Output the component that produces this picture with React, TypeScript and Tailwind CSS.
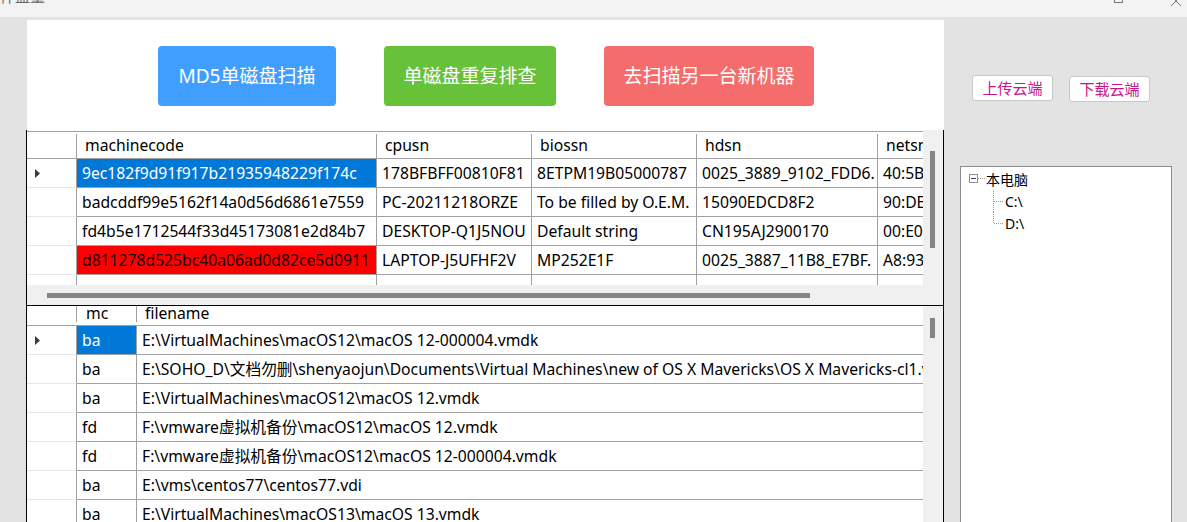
import React from "react";

type Cell = { text: string; tone?: "sel" | "red" };
type Col = { label: string; w: string; pad: string };

const grid1Cols: Col[] = [
  { label: "machinecode", w: "w-[300px]", pad: "pl-[8px]" },
  { label: "cpusn", w: "w-[155px]", pad: "pl-[8px]" },
  { label: "biossn", w: "w-[165px]", pad: "pl-[8px]" },
  { label: "hdsn", w: "w-[181px]", pad: "pl-[8px]" },
  { label: "netsn", w: "w-[120px]", pad: "pl-[8px]" },
];

const grid1Rows: Cell[][] = [
  [
    { text: "9ec182f9d91f917b21935948229f174c", tone: "sel" },
    { text: "178BFBFF00810F81" },
    { text: "8ETPM19B05000787" },
    { text: "0025_3889_9102_FDD6." },
    { text: "40:5B:D8:1A:22:0C" },
  ],
  [
    { text: "badcddf99e5162f14a0d56d6861e7559" },
    { text: "PC-20211218ORZE" },
    { text: "To be filled by O.E.M." },
    { text: "15090EDCD8F2" },
    { text: "90:DE:80:4C:11:2A" },
  ],
  [
    { text: "fd4b5e1712544f33d45173081e2d84b7" },
    { text: "DESKTOP-Q1J5NOU" },
    { text: "Default string" },
    { text: "CN195AJ2900170" },
    { text: "00:E0:4C:68:01:9B" },
  ],
  [
    { text: "d811278d525bc40a06ad0d82ce5d0911", tone: "red" },
    { text: "LAPTOP-J5UFHF2V" },
    { text: "MP252E1F" },
    { text: "0025_3887_11B8_E7BF." },
    { text: "A8:93:4A:5E:77:10" },
  ],
];

const grid2Cols: Col[] = [
  { label: "mc", w: "w-[60px]", pad: "pl-[9px]" },
  { label: "filename", w: "w-[800px]", pad: "pl-[8px]" },
];

const grid2Rows: Cell[][] = [
  [{ text: "ba", tone: "sel" }, { text: "E:\\VirtualMachines\\macOS12\\macOS 12-000004.vmdk" }],
  [
    { text: "ba" },
    {
      text: "E:\\SOHO_D\\文档勿删\\shenyaojun\\Documents\\Virtual Machines\\new of OS X Mavericks\\OS X Mavericks-cl1.vmdk",
    },
  ],
  [{ text: "ba" }, { text: "E:\\VirtualMachines\\macOS12\\macOS 12.vmdk" }],
  [{ text: "fd" }, { text: "F:\\vmware虚拟机备份\\macOS12\\macOS 12.vmdk" }],
  [{ text: "fd" }, { text: "F:\\vmware虚拟机备份\\macOS12\\macOS 12-000004.vmdk" }],
  [{ text: "ba" }, { text: "E:\\vms\\centos77\\centos77.vdi" }],
  [{ text: "ba" }, { text: "E:\\VirtualMachines\\macOS13\\macOS 13.vmdk" }],
];

function RowArrow() {
  return (
    <svg width="6" height="9" viewBox="0 0 6 9" className="ml-[8px]">
      <polygon points="0,0 5,4.5 0,9" fill="#3c3c3c" />
    </svg>
  );
}

function DataRow({ cols, cells, current }: { cols: Col[]; cells: Cell[]; current?: boolean }) {
  return (
    <div className="flex h-[29px] shrink-0">
      <div className="w-[50px] shrink-0 flex items-center border-r border-r-[#a0a0a0] border-b border-b-[#e6e6e6]">
        {current && <RowArrow />}
      </div>
      {cols.map((c, i) => {
        const cell = cells[i];
        const tone =
          cell.tone === "sel"
            ? "bg-[#0078d7] text-white"
            : cell.tone === "red"
            ? "bg-[#ff0000] text-[#1a0000]"
            : "bg-white text-black";
        return (
          <div
            key={i}
            className={`${c.w} shrink-0 border-r border-b border-[#a0a0a0] pl-[5px] pt-[2px] flex items-center overflow-hidden whitespace-nowrap ${tone}`}
          >
            {cell.text}
          </div>
        );
      })}
    </div>
  );
}

function HeaderRow({ cols, tall }: { cols: Col[]; tall?: boolean }) {
  return (
    <div
      className={`flex shrink-0 border-b border-[#a0a0a0] ${
        tall ? "h-[28px] border-t pt-[2px]" : "h-[20px] pb-[3px]"
      }`}
    >
      <div className="w-[50px] shrink-0 border-r border-[#a0a0a0]" />
      {cols.map((c) => (
        <div
          key={c.label}
          className={`${c.w} ${c.pad} shrink-0 border-r border-[#a0a0a0] flex items-center overflow-hidden whitespace-nowrap`}
        >
          {c.label}
        </div>
      ))}
    </div>
  );
}

function PartialRow({ cols }: { cols: Col[] }) {
  return (
    <div className="flex h-[10px] shrink-0">
      <div className="w-[50px] shrink-0 border-r border-[#a0a0a0]" />
      {cols.map((c) => (
        <div key={c.label} className={`${c.w} shrink-0 border-r border-[#a0a0a0]`} />
      ))}
    </div>
  );
}

function TreeView() {
  return (
    <div className="mt-[64px] ml-[16px] w-[212px] h-[400px] shrink-0 bg-white border border-[#8c8c8c] pt-[2px] pl-[8px] text-[14px] text-black">
      <div className="flex items-center h-[20px]">
        <svg width="17" height="20" viewBox="0 0 17 20">
          <rect x="0.5" y="5.5" width="8" height="8" fill="white" stroke="#8f8f8f" />
          <line x1="2" y1="9.5" x2="7" y2="9.5" stroke="#2b3f8c" />
          <line x1="9" y1="9.5" x2="16" y2="9.5" stroke="#9a9a9a" strokeDasharray="1 1" />
        </svg>
        <span>本电脑</span>
      </div>
      <div className="flex items-center h-[22px] mt-[1px]">
        <svg width="36" height="22" viewBox="0 0 36 22">
          <line x1="24.5" y1="-1" x2="24.5" y2="22" stroke="#9a9a9a" strokeDasharray="1 1" />
          <line x1="25" y1="11.5" x2="34" y2="11.5" stroke="#9a9a9a" strokeDasharray="1 1" />
        </svg>
        <span>C:\</span>
      </div>
      <div className="flex items-center h-[22px]">
        <svg width="36" height="22" viewBox="0 0 36 22">
          <line x1="24.5" y1="0" x2="24.5" y2="12" stroke="#9a9a9a" strokeDasharray="1 1" />
          <line x1="25" y1="11.5" x2="34" y2="11.5" stroke="#9a9a9a" strokeDasharray="1 1" />
        </svg>
        <span>D:\</span>
      </div>
    </div>
  );
}

export default function App() {
  return (
    <div className="w-[1187px] h-[522px] overflow-hidden bg-[#e3e3e3] flex flex-col font-['Noto_Sans','Noto_Sans_CJK_SC',sans-serif] text-[15.7px]">
      {/* title bar */}
      <div className="h-[17px] shrink-0 bg-[#f3f3f3] flex items-start overflow-hidden">
        <span className="-mt-[15px] text-[15px] text-[#666]">件盘量</span>
        <div className="flex-1" />
        <svg width="12" height="6" viewBox="0 0 12 6" className="mr-[45px]">
          <rect x="2.5" y="-6" width="8" height="8.5" fill="none" stroke="#777" />
        </svg>
        <svg width="14" height="7" viewBox="0 0 14 7" className="mr-[4px]">
          <line x1="2" y1="-4" x2="7" y2="1" stroke="#777" />
          <line x1="7" y1="1" x2="12" y2="-4" stroke="#777" />
          <line x1="2" y1="6" x2="7" y2="1" stroke="#777" />
          <line x1="7" y1="1" x2="12" y2="6" stroke="#777" />
        </svg>
      </div>

      <div className="flex flex-1 min-h-0">
        {/* left column */}
        <div className="ml-[26px] w-[918px] shrink-0 flex flex-col pt-[3px]">
          <div className="ml-[1px] h-[110px] shrink-0 bg-white flex items-start pt-[26px] pl-[131px] gap-[48px] text-[19px] text-white">
            <button className="w-[178px] h-[60px] rounded-[4px] bg-[#409eff]">MD5单磁盘扫描</button>
            <button className="w-[172px] h-[60px] rounded-[4px] bg-[#67c23a]">单磁盘重复排查</button>
            <button className="w-[210px] h-[60px] rounded-[4px] bg-[#f56c6c]">去扫描另一台新机器</button>
          </div>

          {/* upper grid */}
          <div className="h-[175px] shrink-0 flex border-x border-black">
            <div className="w-[896px] shrink-0 flex flex-col">
              <div className="flex-1 min-h-0 bg-white pt-[1px] overflow-hidden flex flex-col">
                <HeaderRow cols={grid1Cols} tall />
                {grid1Rows.map((r, i) => (
                  <DataRow key={i} cols={grid1Cols} cells={r} current={i === 0} />
                ))}
                <PartialRow cols={grid1Cols} />
              </div>
              <div className="h-[20px] shrink-0 bg-[#f0f0f0] pt-[8px] pl-[20px]">
                <div className="w-[763px] h-[5px] bg-[#858585]" />
              </div>
            </div>
            <div className="w-[20px] shrink-0 bg-[#f0f0f0] pt-[21px] pl-[7px]">
              <div className="w-[5px] h-[97px] bg-[#858585]" />
            </div>
          </div>

          {/* lower grid */}
          <div className="flex-1 min-h-0 flex border-x border-t border-black">
            <div className="w-[896px] shrink-0 bg-white overflow-hidden flex flex-col">
              <HeaderRow cols={grid2Cols} />
              {grid2Rows.map((r, i) => (
                <DataRow key={i} cols={grid2Cols} cells={r} current={i === 0} />
              ))}
            </div>
            <div className="w-[20px] shrink-0 bg-[#f0f0f0] pt-[12px] pl-[7px]">
              <div className="w-[5px] h-[20px] bg-[#858585]" />
            </div>
          </div>
        </div>

        {/* right column */}
        <div className="flex-1 flex flex-col">
          <div className="flex items-start pt-[58px] pl-[28px] gap-[16px] text-[15px] text-[#c8158c]">
            <button className="w-[81px] h-[26px] bg-white border border-[#c8c8c8] rounded-[3px]">上传云端</button>
            <button className="w-[81px] h-[26px] mt-[1px] bg-white border border-[#c8c8c8] rounded-[3px]">下载云端</button>
          </div>
          <TreeView />
        </div>
      </div>
    </div>
  );
}
